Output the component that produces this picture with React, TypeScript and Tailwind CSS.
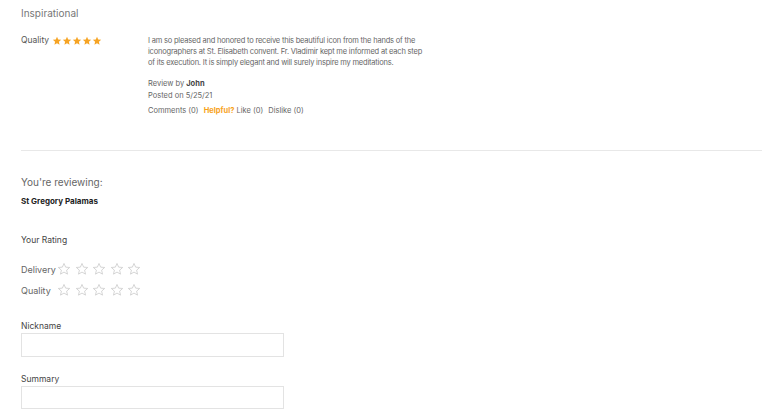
import React from 'react';

const font = { fontFamily: 'Inter, "Liberation Sans", sans-serif' };

const Star = ({ filled }: { filled?: boolean }) =>
  filled ? (
    <svg viewBox="0 0 24 24" className="w-[10px] h-[10px]" fill="#f6a424">
      <path d="M12 2l2.9 6.6 7.1.6-5.4 4.7 1.6 7-6.2-3.7-6.2 3.7 1.6-7L2 9.2l7.1-.6z" />
    </svg>
  ) : (
    <svg viewBox="0 0 24 24" className="w-[14px] h-[14px]" fill="none" stroke="#c8c8c8" strokeWidth="1.3" strokeLinejoin="round">
      <path d="M12 2.5l2.8 6.3 6.9.6-5.2 4.6 1.5 6.8L12 17.3l-6 3.5 1.5-6.8-5.2-4.6 6.9-.6z" />
    </svg>
  );

const RatingRow = ({ label }: { label: string }) => (
  <div className="flex items-center h-[21px]">
    <span className="text-[9px] text-[#666] w-[36px] pt-[3px]">{label}</span>
    <div className="flex gap-[3.5px]">
      {[0, 1, 2, 3, 4].map((i) => (
        <Star key={i} />
      ))}
    </div>
  </div>
);

export default function App() {
  return (
    <div className="w-[775px] h-[418px] bg-white overflow-hidden pl-[21px] pr-[13px]" style={font}>
      <div className="pt-[6px] text-[10px] text-[#777] leading-[14px]">Inspirational</div>

      <div className="flex mt-[15px]">
        <div className="w-[127px] flex items-start">
          <span className="text-[8.5px] text-[#555] leading-[11px] w-[31px]">Quality</span>
          <div className="flex mt-[1px]">
            {[0, 1, 2, 3, 4].map((i) => (
              <Star key={i} filled />
            ))}
          </div>
        </div>
        <div className="text-[7.5px] text-[#666] leading-[11px]">
          <div className="tracking-[-0.2px]">
            <p className="whitespace-nowrap">I am so pleased and honored to receive this beautiful icon from the hands of the</p>
            <p className="whitespace-nowrap">iconographers at St. Elisabeth convent. Fr. Vladimir kept me informed at each step</p>
            <p className="whitespace-nowrap">of its execution. It is simply elegant and will surely inspire my meditations.</p>
          </div>
          <p className="mt-[10px]">
            Review by <span className="font-bold text-[#444]">John</span>
          </p>
          <p className="mt-[1px]">Posted on 5/25/21</p>
          <p className="mt-[4px] whitespace-nowrap">
            Comments (0) <span className="ml-[3px] font-bold text-[#f7a21b]">Helpful?</span> Like (0)
            <span className="ml-[5px]">Dislike (0)</span>
          </p>
        </div>
      </div>

      <div className="mt-[34px] border-t border-[#e8e8e8]" />

      <div className="mt-[24px] text-[10px] text-[#666] leading-[14px]">You're reviewing:</div>
      <div className="mt-[7px] text-[8px] font-bold text-[#222] leading-[11px]">St Gregory Palamas</div>

      <div className="mt-[28px] text-[8.5px] text-[#444] leading-[11px]">Your Rating</div>
      <div className="mt-[12px]">
        <RatingRow label="Delivery" />
        <RatingRow label="Quality" />
      </div>

      <div className="mt-[21px] text-[8.5px] text-[#444] leading-[11px]">Nickname</div>
      <div className="mt-[1px] w-[263px] h-[24px] border border-[#e3e3e3]" />

      <div className="mt-[17px] text-[8.5px] text-[#444] leading-[11px]">Summary</div>
      <div className="mt-[1px] w-[263px] h-[23px] border border-[#e3e3e3]" />
    </div>
  );
}
